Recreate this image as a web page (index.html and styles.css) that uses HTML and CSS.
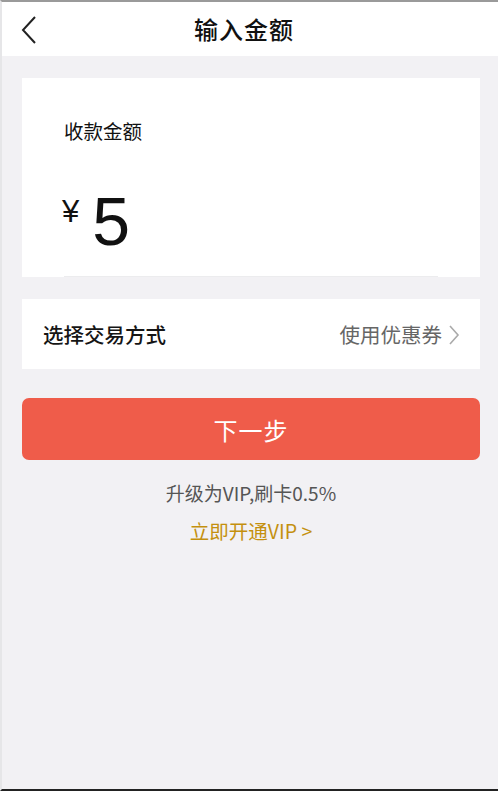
FILE: index.html
```html
<!DOCTYPE html>
<html lang="zh">
<head>
<meta charset="utf-8">
<link rel="stylesheet" href="styles.css">
</head>
<body>
<div class="page">
  <header class="topbar">
    <svg class="back" width="18" height="30" viewBox="0 0 18 30"><path d="M15 2 L3 15 L15 28" fill="none" stroke="#222" stroke-width="2"/></svg>
    <h1 class="title">输入金额</h1>
  </header>
  <main class="content">
    <section class="card amount">
      <div class="label">收款金额</div>
      <div class="value"><span class="yen">¥</span><span class="num">5</span></div>
      <div class="underline"></div>
    </section>
    <section class="card row">
      <span class="row-title">选择交易方式</span>
      <span class="row-right">使用优惠券<svg class="chev" width="12" height="22" viewBox="0 0 12 22"><path d="M2 2 L10 11 L2 20" fill="none" stroke="#aaa" stroke-width="1.6"/></svg></span>
    </section>
    <button class="next">下一步</button>
    <p class="hint">升级为VIP,刷卡0.5%</p>
    <p class="vip">立即开通VIP &gt;</p>
  </main>
</div>
</body>
</html>
```
FILE: styles.css
```css
html, body { margin: 0; padding: 0; }
body {
  width: 498px; height: 791px; overflow: hidden;
  background: #f2f1f4;
  font-family: "Noto Sans CJK SC", "Noto Sans", sans-serif;
  color: #111;
}
.page {
  height: 787px;
  border-top: 2px solid #9a9a9a;
  border-bottom: 2px solid #222;
  border-left: 2px solid #e6e6e8;
}
.topbar {
  height: 54px;
  background: #fff;
  display: flex; align-items: center; justify-content: center;
  position: relative;
}
.back { position: absolute; left: 18px; top: 13px; }
.title { margin: 0 12px 0 0; font-size: 24px; font-weight: 500; letter-spacing: 1px; color: #111; line-height: 30px; }
.content { padding: 22px 18px 0 20px; display: flex; flex-direction: column; }
.card { background: #fff; }
.amount { height: 199px; padding: 0 42px; display: flex; flex-direction: column; }
.label { margin-top: 39px; font-size: 19.5px; line-height: 28px; color: #111; }
.value { margin-top: 48px; display: flex; align-items: flex-start; height: 60px; }
.yen { font-family: "Liberation Sans", sans-serif; font-size: 31px; line-height: 34px; margin-top: 2px; margin-left: -2px; }
.num { font-family: "Liberation Sans", sans-serif; font-size: 68px; line-height: 52px; margin-left: 13px; font-weight: 400; margin-top: 2px; }
.underline { margin-top: auto; height: 1px; background: #ececee; width: 374px; }
.row { margin-top: 22px; height: 70px; display: flex; align-items: center; justify-content: space-between; padding: 0 20px 0 21px; }
.row-title { font-size: 20.5px; font-weight: 500; color: #151515; }
.row-right { font-size: 20.5px; color: #666; display: flex; align-items: center; gap: 6px; }
.chev { margin-top: 1px; }
.next {
  margin-top: 29px; height: 62px; border: none; border-radius: 7px;
  background: #ef5c4a; color: #fff; font-size: 24px; letter-spacing: 1px;
  font-family: "Noto Sans CJK SC", sans-serif;
}
.hint { margin: 19px 0 0; text-align: center; font-size: 19px; line-height: 28px; color: #555; }
.vip { margin: 10px 0 0; text-align: center; font-size: 19.5px; line-height: 28px; color: #c4900e; }
```
